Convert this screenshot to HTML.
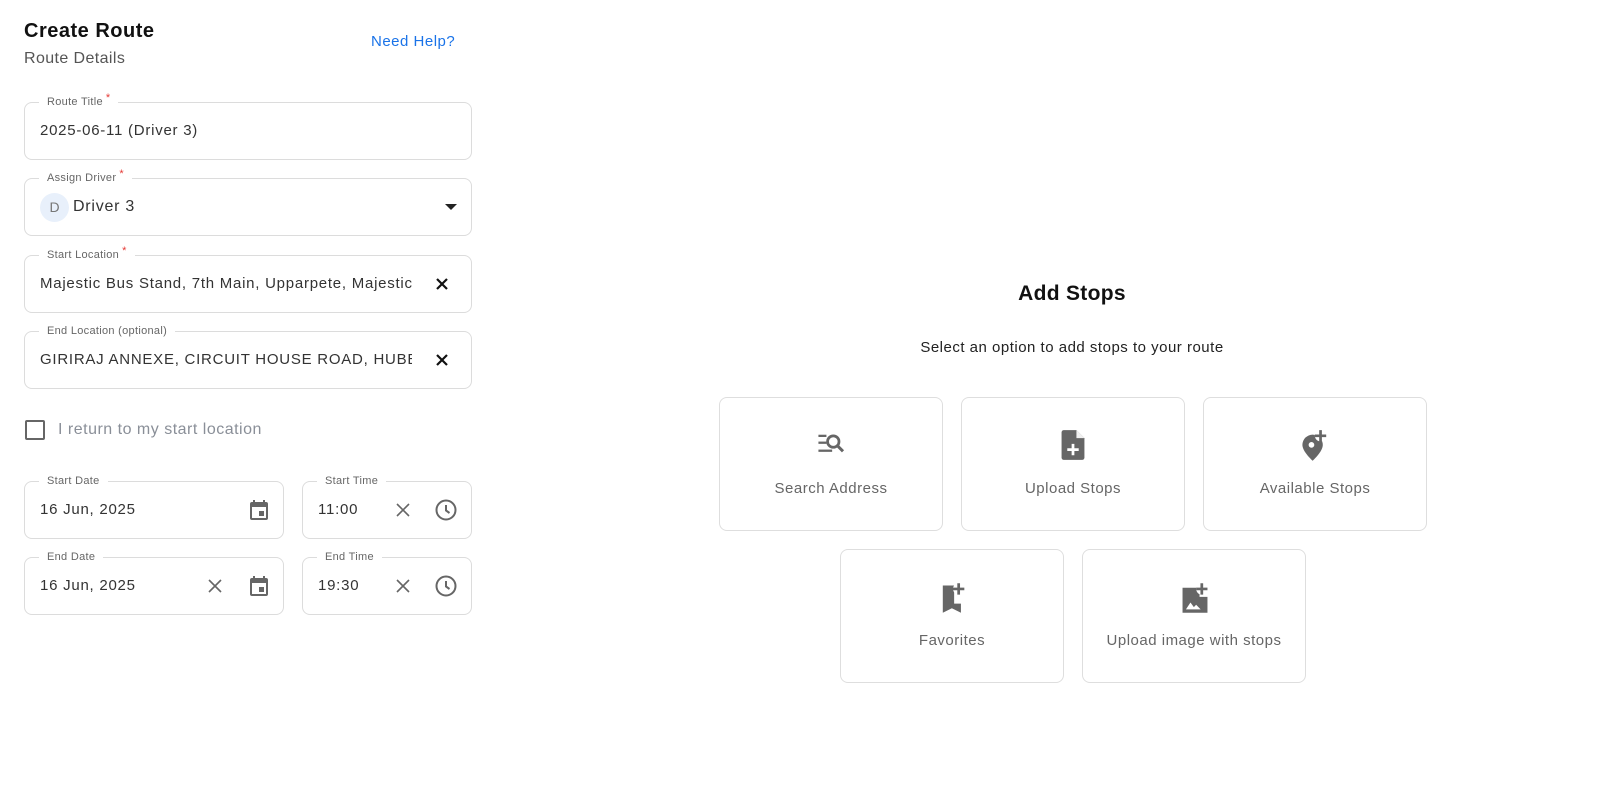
<!DOCTYPE html>
<html><head><meta charset="utf-8"><style>
*{box-sizing:border-box;margin:0;padding:0}
body{width:1600px;height:787px;background:#fff;font-family:"Liberation Sans",sans-serif;color:#222;position:relative;overflow:hidden}
.a{position:absolute}
.f{position:absolute;border:1px solid #dcdcdc;border-radius:8px;height:58px}
.lab{position:absolute;top:-9px;left:14px;background:#fff;padding:0 8px;font-size:11px;color:#666;letter-spacing:.3px;line-height:16px}
.lab i{color:#e53935;font-style:normal;position:relative;top:-4px;margin-left:3px}
.v{position:absolute;left:15px;top:19px;font-size:15px;color:#333;letter-spacing:.75px;white-space:nowrap;overflow:hidden}
.card{position:absolute;width:224px;height:134px;border:1px solid #dedede;border-radius:8px;text-align:center}
.card svg{position:absolute;left:50%;margin-left:-16px;top:31px}
.card span{position:absolute;left:0;right:0;top:82px;font-size:15px;color:#666;letter-spacing:.5px}
</style></head><body>
<div class="a" style="left:24px;top:20px;font-size:20px;font-weight:bold;color:#111;letter-spacing:.5px">Create Route</div>
<div class="a" style="left:24px;top:50px;font-size:16px;color:#555;letter-spacing:.4px">Route Details</div>
<div class="a" style="left:371px;top:33px;font-size:15px;color:#1a73e8;letter-spacing:.5px">Need Help?</div>

<div class="f" style="left:24px;top:102px;width:448px"><div class="lab">Route Title<i>*</i></div><div class="v">2025-06-11 (Driver 3)</div></div>
<div class="f" style="left:24px;top:178px;width:448px"><div class="lab">Assign Driver<i>*</i></div>
<div class="a" style="left:15px;top:14px;width:29px;height:29px;border-radius:50%;background:#e8f0fb;color:#777;font-size:14px;text-align:center;line-height:29px">D</div>
<div class="v" style="left:48px;font-size:16px">Driver 3</div>
<svg class="a" style="left:420px;top:25px" width="12" height="7"><path d="M0 0h12L6 6z" fill="#222"/></svg></div>
<div class="f" style="left:24px;top:255px;width:448px"><div class="lab">Start Location<i>*</i></div><div class="v" style="width:372px">Majestic Bus Stand, 7th Main, Upparpete, Majestic</div>
<svg class="a" style="left:410px;top:21px" width="14" height="14"><path d="M2 2l10 10M12 2L2 12" stroke="#111" stroke-width="2.2"/></svg></div>
<div class="f" style="left:24px;top:331px;width:448px"><div class="lab">End Location (optional)</div><div class="v" style="width:372px">GIRIRAJ ANNEXE, CIRCUIT HOUSE ROAD, HUBBALLI, KARNATAKA</div>
<svg class="a" style="left:410px;top:21px" width="14" height="14"><path d="M2 2l10 10M12 2L2 12" stroke="#111" stroke-width="2.2"/></svg></div>

<div class="a" style="left:25px;top:420px;width:20px;height:20px;border:2px solid #666;border-radius:2px"></div>
<div class="a" style="left:58px;top:421px;font-size:16px;color:#8a8f98;letter-spacing:.5px">I return to my start location</div>

<div class="f" style="left:24px;top:481px;width:260px"><div class="lab">Start Date</div><div class="v">16 Jun, 2025</div>
<svg class="a" style="left:222px;top:16px" width="24" height="24" viewBox="0 0 24 24"><path fill="#666" d="M19 4h-1V2h-2v2H8V2H6v2H5a2 2 0 0 0-2 2v14a2 2 0 0 0 2 2h14a2 2 0 0 0 2-2V6a2 2 0 0 0-2-2zm0 16H5V9h14zM12 13h5v5h-5z"/></svg></div>
<div class="f" style="left:302px;top:481px;width:170px"><div class="lab">Start Time</div><div class="v">11:00</div>
<svg class="a" style="left:92px;top:20px" width="16" height="16"><path d="M2 2l12 12M14 2L2 14" stroke="#666" stroke-width="1.6"/></svg>
<svg class="a" style="left:131px;top:16px" width="24" height="24" viewBox="0 0 24 24"><circle cx="12" cy="12" r="9.5" fill="none" stroke="#666" stroke-width="2"/><path d="M12 7v5.5l3.5 2.5" fill="none" stroke="#666" stroke-width="2"/></svg></div>
<div class="f" style="left:24px;top:557px;width:260px"><div class="lab">End Date</div><div class="v">16 Jun, 2025</div>
<svg class="a" style="left:182px;top:20px" width="16" height="16"><path d="M2 2l12 12M14 2L2 14" stroke="#666" stroke-width="1.6"/></svg>
<svg class="a" style="left:222px;top:16px" width="24" height="24" viewBox="0 0 24 24"><path fill="#666" d="M19 4h-1V2h-2v2H8V2H6v2H5a2 2 0 0 0-2 2v14a2 2 0 0 0 2 2h14a2 2 0 0 0 2-2V6a2 2 0 0 0-2-2zm0 16H5V9h14zM12 13h5v5h-5z"/></svg></div>
<div class="f" style="left:302px;top:557px;width:170px"><div class="lab">End Time</div><div class="v">19:30</div>
<svg class="a" style="left:92px;top:20px" width="16" height="16"><path d="M2 2l12 12M14 2L2 14" stroke="#666" stroke-width="1.6"/></svg>
<svg class="a" style="left:131px;top:16px" width="24" height="24" viewBox="0 0 24 24"><circle cx="12" cy="12" r="9.5" fill="none" stroke="#666" stroke-width="2"/><path d="M12 7v5.5l3.5 2.5" fill="none" stroke="#666" stroke-width="2"/></svg></div>

<div class="a" style="left:872px;width:400px;top:282px;text-align:center;font-size:21px;font-weight:bold;color:#111;letter-spacing:.3px">Add Stops</div>
<div class="a" style="left:822px;width:500px;top:339px;text-align:center;font-size:15px;color:#222;letter-spacing:.5px">Select an option to add stops to your route</div>

<div class="card" style="left:719px;top:397px"><svg width="32" height="32" viewBox="0 0 28 28" fill="#666"><rect x="3" y="5" width="7" height="2"/><rect x="3" y="11" width="7" height="2"/><rect x="3" y="18" width="12" height="2"/><circle cx="16" cy="11" r="5" fill="none" stroke="#666" stroke-width="2.4"/><path d="M19.5 14.5l5 5" stroke="#666" stroke-width="2.6"/></svg><span>Search Address</span></div>
<div class="card" style="left:961px;top:397px"><svg width="32" height="32" viewBox="0 0 28 28"><path fill="#666" d="M6 1h11l7 7v17a2 2 0 0 1-2 2H6a2 2 0 0 1-2-2V3a2 2 0 0 1 2-2z"/><path fill="#fff" d="M17 1v7h7z" opacity=".9"/><path d="M14 13v10M9 18h10" stroke="#fff" stroke-width="2.4"/></svg><span>Upload Stops</span></div>
<div class="card" style="left:1203px;top:397px"><svg width="34" height="34" viewBox="0 0 30 30"><path fill="#666" d="M12 5a9 9 0 0 0-9 9c0 6 9 14 9 14s9-8 9-14a9 9 0 0 0-9-9z"/><circle cx="11" cy="14" r="2.5" fill="#fff"/><circle cx="19" cy="6" r="5" fill="#fff"/><path d="M19 1v10M14 6h10" stroke="#666" stroke-width="2.4"/></svg><span>Available Stops</span></div>
<div class="card" style="left:840px;top:549px"><svg width="34" height="34" viewBox="0 0 30 30"><path fill="#666" d="M6 4h10v16h6v8l-8-4-8 4z"/><circle cx="20" cy="7" r="5" fill="#fff"/><path d="M20 2v10M15 7h10" stroke="#666" stroke-width="2.4"/></svg><span>Favorites</span></div>
<div class="card" style="left:1082px;top:549px"><svg width="34" height="34" viewBox="0 0 30 30"><path fill="#666" d="M4 6h15v8h7v14H4z"/><circle cx="21" cy="7" r="5" fill="#fff"/><path d="M21 2v10M16 7h10" stroke="#666" stroke-width="2.4"/><path fill="#fff" d="M7 25l4-6 3 4 2-2 4 4z"/></svg><span>Upload image with stops</span></div>
</body></html>
